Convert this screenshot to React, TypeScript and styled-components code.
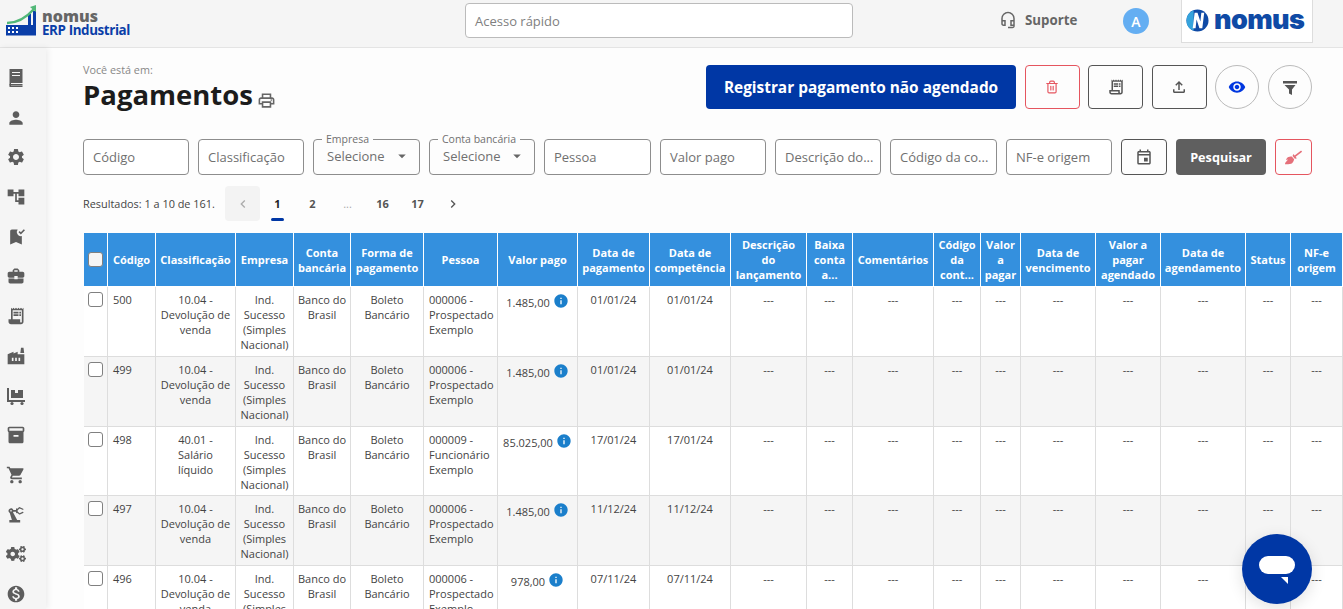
import React from 'react';
import styled, { createGlobalStyle } from 'styled-components';
import {
  MdPerson, MdSettings, MdAccountTree, MdBookmarkAdded, MdBusinessCenter, MdReceiptLong,
  MdFactory, MdInventory2, MdShoppingCart, MdPrecisionManufacturing, MdMonetizationOn, MdOutlinePrint,
  MdOutlineHeadsetMic, MdOutlineFileUpload, MdVisibility, MdOutlineEvent,
  MdInfo, MdArrowDropDown, MdChevronLeft, MdChevronRight, MdOutlineReceiptLong,
} from 'react-icons/md';
import { FaCogs, FaBroom } from 'react-icons/fa';
import { Trash2 } from 'lucide-react';

const Global = createGlobalStyle`
  html, body { margin: 0; padding: 0; overflow: hidden; }
  body { font-family: "Open Sans", "Liberation Sans", sans-serif; color: #333; background: #fdfdfd; }
  * { box-sizing: border-box; }
`;

const Page = styled.div`
  position: relative;
  width: 1343px;
  height: 609px;
  overflow: hidden;
  display: flex;
  flex-direction: column;
`;

const Header = styled.header`
  flex: 0 0 48px;
  display: flex;
  align-items: flex-start;
  background: #f5f5f5;
  border-bottom: 1px solid #e4e4e4;
`;

const Brand = styled.div`
  width: 465px;
  height: 47px;
  padding: 5px 0 0 6px;
  display: flex;
`;

const BrandText = styled.div`
  display: flex;
  flex-direction: column;
  padding-top: 4px;
`;

const BrandName = styled.span`
  font-size: 16px;
  line-height: 14px;
  font-weight: 800;
  color: #666;
`;

const BrandProduct = styled.span`
  font-size: 13.4px;
  line-height: 15px;
  font-weight: 700;
  letter-spacing: -0.4px;
  color: #0a3ea8;
`;

const QuickAccess = styled.div`
  width: 388px;
  height: 35px;
  margin-top: 3px;
  padding-left: 9px;
  display: flex;
  align-items: center;
  background: #fff;
  border: 1px solid #bbb;
  border-radius: 4px;
  font-size: 13px;
  color: #808080;
`;

const Support = styled.div`
  margin: 11px 0 0 146px;
  width: 124px;
  display: flex;
  align-items: center;
  gap: 8px;
  font-size: 13.3px;
  font-weight: 700;
  color: #666;
  svg { font-size: 18px; }
`;

const Avatar = styled.div`
  width: 26px;
  height: 26px;
  margin-top: 8px;
  border-radius: 50%;
  background: #64aef2;
  color: #fff;
  font-size: 14px;
  font-weight: 600;
  display: flex;
  align-items: center;
  justify-content: center;
`;

const CompanyLogo = styled.div`
  width: 132px;
  height: 43px;
  margin-left: 32px;
  background: #fff;
  border: 1px solid #ddd;
  border-top: 0;
  display: flex;
  align-items: center;
  gap: 5px;
  padding: 0 0 2px 4px;
`;

const CompanyName = styled.span`
  font-family: "Inter", "Open Sans", sans-serif;
  font-size: 27px;
  line-height: 26px;
  font-weight: 900;
  letter-spacing: -0.6px;
  color: #0f4aa5;
`;

const Body = styled.div`
  flex: 1;
  display: flex;
  min-height: 0;
`;

const Sidebar = styled.nav`
  flex: 0 0 46px;
  display: flex;
  flex-direction: column;
  align-items: center;
  padding: 20px 15px 0 0;
  gap: 19.7px;
  background: #f5f5f5;
  box-shadow: 2px 0 6px rgba(0, 0, 0, 0.07);
  color: #5d5d5d;
  z-index: 1;
  svg { flex: 0 0 20px; font-size: 20px; }
`;

const Main = styled.main`
  flex: 1;
  min-width: 0;
  padding: 14px 0 0 37px;
  background: #fdfdfd;
`;

const TopRow = styled.div`
  display: flex;
  justify-content: space-between;
  padding-right: 31px;
  height: 47px;
  margin-top: 3px;
`;

const TitleBlock = styled.div`
  display: flex;
  flex-direction: column;
`;

const Crumb = styled.span`
  font-size: 10.8px;
  line-height: 15px;
  color: #888;
  margin-top: -3px;
`;

const Title = styled.h1`
  margin: 0;
  display: flex;
  align-items: flex-end;
  gap: 4px;
  font-size: 27.5px;
  line-height: 36px;
  font-weight: 700;
  color: #1c1c1c;
  svg { font-size: 19px; color: #666; margin-bottom: 3px; }
`;

const Actions = styled.div`
  display: flex;
  gap: 8.6px;
`;

const Primary = styled.button`
  width: 310px;
  height: 44px;
  border: 0;
  border-radius: 4px;
  background: #0037a5;
  color: #fff;
  font: 700 15.4px "Open Sans", sans-serif;
`;

const IconButton = styled.button<{ $danger?: boolean }>`
  width: 55px;
  height: 44px;
  display: flex;
  align-items: center;
  justify-content: center;
  background: transparent;
  border: 1px solid ${p => (p.$danger ? '#e5555f' : '#555')};
  border-radius: 4px;
  color: ${p => (p.$danger ? '#e5555f' : '#555')};
  font-size: 18px;
  padding: 0;
`;

const RoundButton = styled.button<{ $color: string }>`
  width: 44px;
  height: 44px;
  display: flex;
  align-items: center;
  justify-content: center;
  background: transparent;
  border: 1px solid #bbb;
  border-radius: 50%;
  color: ${p => p.$color};
  font-size: 18px;
  padding: 0;
`;

const Filters = styled.div`
  display: flex;
  gap: 9px;
  margin-top: 27px;
`;

const Field = styled.div<{ $w: number }>`
  position: relative;
  width: ${p => p.$w}px;
  height: 36px;
  padding: 0 9px;
  display: flex;
  align-items: center;
  background: #fff;
  border: 1px solid #8d8d8d;
  border-radius: 4px;
  font-size: 13px;
  color: #707070;
  white-space: nowrap;
`;

const SelectField = styled(Field)`
  background: transparent;
  justify-content: space-between;
  padding: 0 13px 3px 13px;
  svg { font-size: 18px; color: #666; margin-right: -5px; }
`;

const Legend = styled.span`
  position: absolute;
  top: -7px;
  left: 8px;
  padding: 0 4px;
  font-size: 10.5px;
  line-height: 13px;
  background: #fdfdfd;
  color: #707070;
`;

const CalendarButton = styled.button`
  width: 46px;
  height: 36px;
  display: flex;
  align-items: center;
  justify-content: center;
  background: transparent;
  border: 1px solid #555;
  border-radius: 4px;
  color: #555;
  font-size: 18px;
  padding: 0;
`;

const SearchButton = styled.button`
  width: 90px;
  height: 36px;
  border: 0;
  border-radius: 4px;
  background: #5f5f5f;
  color: #fff;
  font: 700 12.7px "Open Sans", sans-serif;
`;

const ClearButton = styled.button`
  width: 37px;
  height: 36px;
  display: flex;
  align-items: center;
  justify-content: center;
  background: transparent;
  border: 1px solid #e5555f;
  border-radius: 4px;
  color: #e5707a;
  font-size: 17px;
  padding: 0;
`;

const Pagination = styled.div`
  display: flex;
  align-items: center;
  height: 35px;
  margin-top: 11px;
`;

const ResultText = styled.span`
  width: 142px;
  font-size: 10.9px;
  color: #444;
`;

const PageItem = styled.div<{ $active?: boolean; $box?: boolean; $muted?: boolean }>`
  position: relative;
  width: 35px;
  height: 35px;
  display: flex;
  align-items: center;
  justify-content: center;
  border-radius: 4px;
  font-size: 11px;
  font-weight: ${p => (p.$muted ? 400 : 700)};
  color: ${p => (p.$muted ? '#aaa' : p.$active ? '#222' : '#555')};
  background: ${p => (p.$box ? '#f3f3f3' : 'transparent')};
  svg { font-size: 16px; color: ${p => (p.$box ? '#aaa' : '#555')}; }
  &::after {
    content: '';
    display: ${p => (p.$active ? 'block' : 'none')};
    position: absolute;
    bottom: 0;
    left: 11px;
    width: 13px;
    height: 3px;
    border-radius: 2px;
    background: #0037a5;
  }
`;

const Table = styled.table`
  margin: 12px 0 0 1px;
  width: 1259px;
  table-layout: fixed;
  border-collapse: separate;
  border-spacing: 0;
`;

const Th = styled.th`
  height: 54px;
  padding: 0 3px;
  background: #3490de;
  color: #fff;
  font-size: 11px;
  line-height: 15px;
  font-weight: 700;
  text-align: center;
  vertical-align: middle;
  border-right: 1px solid #fff;
  border-bottom: 1px solid #fff;
  overflow: hidden;
`;

const WideTh = styled(Th)`
  padding: 0 1px;
`;

const Tr = styled.tr<{ $alt: boolean }>`
  background: ${p => (p.$alt ? '#f5f5f5' : '#fff')};
`;

const Td = styled.td<{ $left?: boolean }>`
  height: 69.8px;
  padding: 5px 4px 0 ${p => (p.$left ? '5px' : '4px')};
  font-size: 11px;
  line-height: 15px;
  color: #444;
  text-align: ${p => (p.$left ? 'left' : 'center')};
  vertical-align: top;
  border-right: 1px solid #ddd;
  border-bottom: 1px solid #ddd;
`;

const TightTd = styled(Td)`
  padding-left: 1px;
  padding-right: 1px;
`;

const Check = styled.span<{ $head?: boolean }>`
  display: inline-block;
  width: 15px;
  height: 15px;
  margin-left: -1px;
  vertical-align: top;
  background: ${p => (p.$head ? '#f5f5f5' : '#fff')};
  border: 1px solid #808080;
  border-radius: 3px;
`;

const Money = styled.div`
  display: flex;
  justify-content: center;
  align-items: flex-start;
  gap: 3px;
  span { margin-top: 3px; }
  svg { font-size: 16px; color: #1b7fcb; margin-top: 1px; }
`;

const Chat = styled.div`
  position: absolute;
  left: 1242px;
  top: 534px;
  width: 70px;
  height: 70px;
  border-radius: 50%;
  background: #0037a5;
  box-shadow: 0 4px 16px rgba(0, 0, 0, 0.12);
  display: flex;
  align-items: center;
  justify-content: center;
`;

const BrandMark = () => (
  <svg width="36" height="31" viewBox="0 0 36 31">
    <rect x="0" y="20" width="30" height="10.5" fill="#0a3ea8" />
    <rect x="22" y="9" width="3" height="12" fill="#0a3ea8" />
    <rect x="27" y="6" width="3" height="15" fill="#0a3ea8" />
    <path d="M1 18 C12 18 20 13 28 4" fill="none" stroke="#52b878" strokeWidth="2.5" />
    <path d="M24 2 L30 0 L30 7 Z" fill="#52b878" />
    <g fill="#fff">
      <rect x="2" y="22" width="2" height="2" /><rect x="6" y="22" width="2" height="2" /><rect x="10" y="22" width="2" height="2" />
      <rect x="2" y="26" width="2" height="2" /><rect x="6" y="26" width="2" height="2" /><rect x="10" y="26" width="2" height="2" />
    </g>
  </svg>
);

const NomusMark = () => (
  <svg width="23" height="23" viewBox="0 0 24 24">
    <circle cx="12" cy="12" r="11.5" fill="#0f4aa5" />
    <path d="M0.5 12 A11.5 11.5 0 0 1 8 1.2 L8 22.8 A11.5 11.5 0 0 1 0.5 12 Z" fill="#35a3dc" />
    <path d="M7 20 L9 4 L12 4 L15 13 L16 4 L19 4 L17 20 L14 20 L11 11 L10 20 Z" fill="#fff" />
  </svg>
);

const DollyIcon = () => (
  <svg width="20" height="20" viewBox="0 0 20 20" fill="currentColor">
    <path d="M1 2h2v12h16v2H1z" />
    <path d="M5 4h4v3h3V4h5v8H5z" />
    <circle cx="6" cy="17.5" r="1.6" /><circle cx="16" cy="17.5" r="1.6" />
  </svg>
);

const BookIcon = () => (
  <svg width="20" height="20" viewBox="0 0 20 20" fill="currentColor">
    <path d="M3.5 1h13v14h-13z" />
    <path d="M3.5 16h13v1.5h-13z" />
    <path d="M3.5 15v4h13v-1.2H5V15z" />
    <path d="M6 4h8v1H6zM6 7h8v1H6z" fill="#f5f5f5" />
  </svg>
);

const FunnelIcon = () => (
  <svg width="20" height="20" viewBox="0 0 20 20" fill="currentColor">
    <path d="M3 4h14v2.5H3z" />
    <path d="M4.5 8h11L12 12.5V18l-3-1.5v-4z" />
  </svg>
);

const widths = [24, 48, 80, 58, 57, 73, 74, 80, 72, 81, 76, 46, 81, 47, 40, 75, 65, 85, 45, 52];
const heads = ['', 'Código', 'Classificação', 'Empresa', 'Conta bancária', 'Forma de pagamento', 'Pessoa', 'Valor pago',
  'Data de pagamento', 'Data de competência', 'Descrição do lançamento', 'Baixa conta a...', 'Comentários',
  'Código da cont...', 'Valor a pagar', 'Data de vencimento', 'Valor a pagar agendado', 'Data de agendamento', 'Status', 'NF-e origem'];
const tightHeads = new Set([0, 1, 2, 4, 5]);

const rows = [
  { code: '500', cls: '10.04 - Devolução de venda', who: '000006 - Prospectado Exemplo', value: '1.485,00', paid: '01/01/24' },
  { code: '499', cls: '10.04 - Devolução de venda', who: '000006 - Prospectado Exemplo', value: '1.485,00', paid: '01/01/24' },
  { code: '498', cls: '40.01 - Salário líquido', who: '000009 - Funcionário Exemplo', value: '85.025,00', paid: '17/01/24' },
  { code: '497', cls: '10.04 - Devolução de venda', who: '000006 - Prospectado Exemplo', value: '1.485,00', paid: '11/12/24' },
  { code: '496', cls: '10.04 - Devolução de venda', who: '000006 - Prospectado Exemplo', value: '978,00', paid: '07/11/24' },
];

const navIcons = [
  <BookIcon key="a" />, <MdPerson key="b" />, <MdSettings key="c" />, <MdAccountTree key="d" />,
  <MdBookmarkAdded key="e" />, <MdBusinessCenter key="f" />, <MdReceiptLong key="g" />, <MdFactory key="h" />,
  <DollyIcon key="i" />, <MdInventory2 key="j" />, <MdShoppingCart key="k" />, <MdPrecisionManufacturing key="l" />,
  <FaCogs key="m" />, <MdMonetizationOn key="n" />,
];

export default function App() {
  return (
    <Page>
      <Global />
      <Header>
        <Brand>
          <BrandMark />
          <BrandText>
            <BrandName>nomus</BrandName>
            <BrandProduct>ERP Industrial</BrandProduct>
          </BrandText>
        </Brand>
        <QuickAccess>Acesso rápido</QuickAccess>
        <Support><MdOutlineHeadsetMic />Suporte</Support>
        <Avatar>A</Avatar>
        <CompanyLogo><NomusMark /><CompanyName>nomus</CompanyName></CompanyLogo>
      </Header>
      <Body>
        <Sidebar>{navIcons}</Sidebar>
        <Main>
          <TopRow>
            <TitleBlock>
              <Crumb>Você está em:</Crumb>
              <Title>Pagamentos <MdOutlinePrint /></Title>
            </TitleBlock>
            <Actions>
              <Primary>Registrar pagamento não agendado</Primary>
              <IconButton $danger><Trash2 size={14} /></IconButton>
              <IconButton><MdOutlineReceiptLong /></IconButton>
              <IconButton><MdOutlineFileUpload /></IconButton>
              <RoundButton $color="#0037e0"><MdVisibility /></RoundButton>
              <RoundButton $color="#555"><FunnelIcon /></RoundButton>
            </Actions>
          </TopRow>
          <Filters>
            <Field $w={106}>Código</Field>
            <Field $w={106}>Classificação</Field>
            <SelectField $w={107}><Legend>Empresa</Legend>Selecione<MdArrowDropDown /></SelectField>
            <SelectField $w={106}><Legend>Conta bancária</Legend>Selecione<MdArrowDropDown /></SelectField>
            <Field $w={107}>Pessoa</Field>
            <Field $w={106}>Valor pago</Field>
            <Field $w={106}>Descrição do...</Field>
            <Field $w={107}>Código da co...</Field>
            <Field $w={106}>NF-e origem</Field>
            <CalendarButton><MdOutlineEvent /></CalendarButton>
            <SearchButton>Pesquisar</SearchButton>
            <ClearButton><FaBroom /></ClearButton>
          </Filters>
          <Pagination>
            <ResultText>Resultados: 1 a 10 de 161.</ResultText>
            <PageItem $box><MdChevronLeft /></PageItem>
            <PageItem $active>1</PageItem>
            <PageItem>2</PageItem>
            <PageItem $muted>...</PageItem>
            <PageItem>16</PageItem>
            <PageItem>17</PageItem>
            <PageItem><MdChevronRight /></PageItem>
          </Pagination>
          <Table>
            <colgroup>{widths.map((w, i) => <col key={i} width={w} />)}</colgroup>
            <thead>
              <tr>
                {heads.map((h, i) => {
                  const Cell = tightHeads.has(i) ? WideTh : Th;
                  return <Cell key={i}>{i === 0 ? <Check $head /> : h}</Cell>;
                })}
              </tr>
            </thead>
            <tbody>
              {rows.map((r, i) => (
                <Tr key={r.code} $alt={i % 2 === 1}>
                  <TightTd><Check /></TightTd>
                  <Td $left>{r.code}</Td>
                  <Td>{r.cls}</Td>
                  <Td>Ind. Sucesso (Simples Nacional)</Td>
                  <TightTd>Banco do Brasil</TightTd>
                  <Td>Boleto Bancário</Td>
                  <Td $left>{r.who}</Td>
                  <TightTd><Money><span>{r.value}</span><MdInfo /></Money></TightTd>
                  <Td>{r.paid}</Td>
                  <Td>{r.paid}</Td>
                  {Array.from({ length: 10 }, (_, k) => <Td key={k}>---</Td>)}
                </Tr>
              ))}
            </tbody>
          </Table>
        </Main>
      </Body>
      <Chat>
        <svg width="38" height="30" viewBox="0 0 38 30">
          <rect x="1" y="2" width="36" height="18" rx="9" fill="#fff" />
          <path d="M23 23 L30 23 L30 30 Z" fill="#fff" />
        </svg>
      </Chat>
    </Page>
  );
}
